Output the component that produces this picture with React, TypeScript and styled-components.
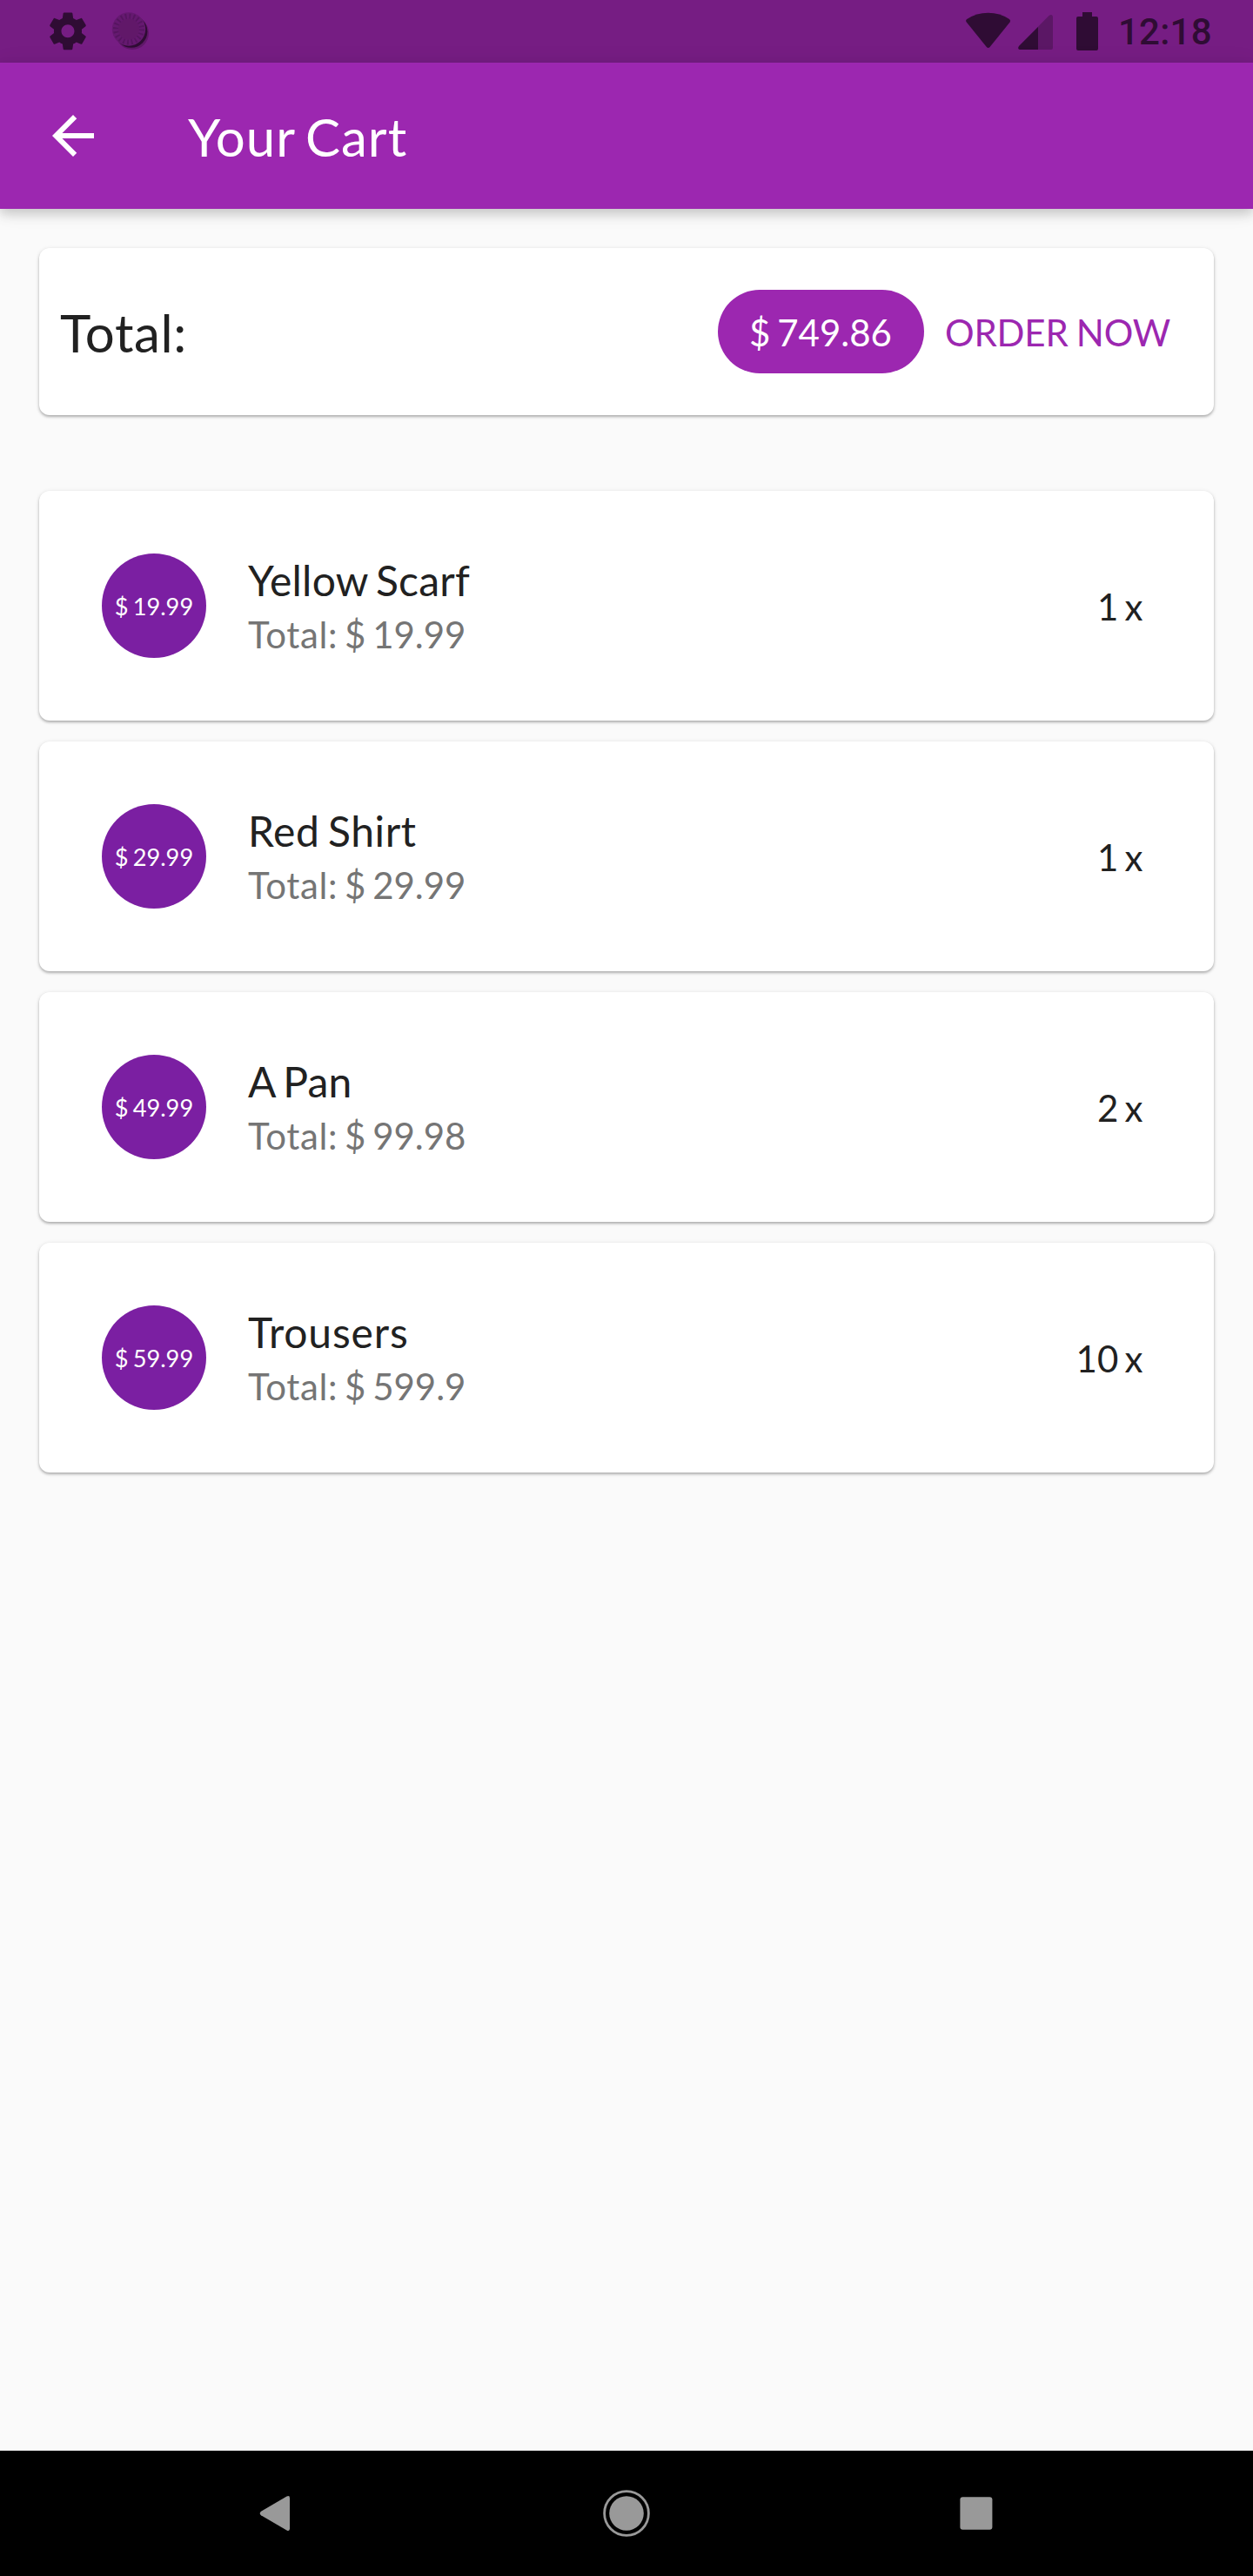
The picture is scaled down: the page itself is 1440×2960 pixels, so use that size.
import React from 'react';
import styled, { createGlobalStyle } from 'styled-components';

const GlobalStyle = createGlobalStyle`
  * { box-sizing: border-box; }
  body { margin: 0; background: #fafafa; font-family: Lato, 'Liberation Sans', sans-serif; }
`;

const Screen = styled.div`
  display: flex;
  flex-direction: column;
  width: 1440px;
  height: 2960px;
  background: #fafafa;
  color: #212121;
  overflow: hidden;
`;

const StatusBar = styled.div`
  display: flex;
  justify-content: space-between;
  height: 72px;
  flex: none;
  background: #761d83;
`;

const StatusGroup = styled.div`
  display: flex;
`;

const Clock = styled.span`
  width: 155px;
  padding-top: 1px;
  font: 500 42px/72px Roboto, sans-serif;
  letter-spacing: 0.25px;
  color: #2f0c34;
`;

const AppBar = styled.header`
  display: flex;
  align-items: center;
  flex: none;
  height: 168px;
  padding-left: 48px;
  gap: 96px;
  background: #9c27b0;
  box-shadow: 0 6px 12px rgba(0, 0, 0, 0.17), 0 2px 24px rgba(0, 0, 0, 0.08);
`;

const AppTitle = styled.h1`
  margin: 0;
  padding-top: 2px;
  font-size: 60px;
  font-weight: 400;
  line-height: 72px;
  letter-spacing: 0.97px;
  word-spacing: -4.1px;
  color: #fff;
`;

const Content = styled.main`
  display: flex;
  flex-direction: column;
  flex: 1;
  padding: 45px 45px 0;
`;

const Card = styled.section`
  display: flex;
  align-items: center;
  border-radius: 12px;
  background: #fff;
  box-shadow: 0 2px 3px rgba(0, 0, 0, 0.24), 0 1px 5px rgba(0, 0, 0, 0.12);
`;

const SummaryCard = styled(Card)`
  height: 192px;
  padding: 0 24px;
  margin-bottom: 87px;
`;

const TotalLabel = styled.span`
  flex: 1;
  padding-top: 2px;
  font-size: 60px;
  line-height: 72px;
  letter-spacing: 0.65px;
`;

const Chip = styled.span`
  display: flex;
  align-items: center;
  width: 237px;
  height: 96px;
  padding: 2px 0 0 36px;
  border-radius: 48px;
  background: #9c27b0;
  color: #fff;
  font-size: 42px;
  word-spacing: -2.9px;
  white-space: nowrap;
`;

const OrderButton = styled.button`
  width: 309px;
  height: 108px;
  padding: 2px 0 0 24px;
  border: 0;
  background: none;
  color: #9c27b0;
  font: 400 42px/50px Lato, sans-serif;
  letter-spacing: -0.18px;
  word-spacing: -1.3px;
  text-align: left;
  white-space: nowrap;
`;

const CartList = styled.div`
  display: flex;
  flex-direction: column;
  gap: 24px;
`;

const ItemCard = styled(Card)`
  height: 264px;
  padding: 0 72px;
`;

const Avatar = styled.div`
  display: flex;
  align-items: center;
  justify-content: center;
  width: 120px;
  height: 120px;
  border-radius: 50%;
  background: #7b1fa2;
  color: #fff;
  font-size: 27.2px;
  word-spacing: -1.9px;
`;

const ItemText = styled.div`
  display: flex;
  flex-direction: column;
  flex: 1;
  margin-left: 48px;
  padding-top: 3px;
`;

const ItemTitle = styled.span<{ $tracking: number }>`
  font-size: 48px;
  line-height: 58px;
  letter-spacing: ${(p) => p.$tracking}px;
  word-spacing: -3.3px;
`;

const ItemTotal = styled.span`
  margin-top: 4px;
  font-size: 42px;
  line-height: 58px;
  word-spacing: -2.9px;
  color: #757575;
`;

const ItemTotalLabel = styled.span`
  letter-spacing: 0.6px;
`;

const Quantity = styled.span`
  padding: 2px 9.5px 0 0;
  font-size: 42px;
  word-spacing: -3.5px;
`;

const NavBar = styled.nav`
  display: flex;
  align-items: center;
  justify-content: center;
  gap: 258px;
  flex: none;
  height: 144px;
  background: #000;
`;

interface CartItem {
  title: string;
  tracking: number;
  price: string;
  total: string;
  quantity: number;
}

const items: CartItem[] = [
  { title: 'Yellow Scarf', tracking: 0.24, price: '19.99', total: '19.99', quantity: 1 },
  { title: 'Red Shirt', tracking: 0.57, price: '29.99', total: '29.99', quantity: 1 },
  { title: 'A Pan', tracking: 0.2, price: '49.99', total: '99.98', quantity: 2 },
  { title: 'Trousers', tracking: 0.85, price: '59.99', total: '599.9', quantity: 10 },
];

const SystemIcons = () => (
  <svg width="200" height="72" viewBox="0 0 200 72">
    <path
      transform="translate(52.3 10.1) scale(2.14)"
      fill="#2f0c34"
      d="M19.43 12.98c.04-.32.07-.64.07-.98s-.03-.66-.07-.98l2.11-1.65c.19-.15.24-.42.12-.64l-2-3.46c-.12-.22-.39-.3-.61-.22l-2.49 1c-.52-.4-1.08-.73-1.69-.98l-.38-2.65C14.46 2.18 14.25 2 14 2h-4c-.25 0-.46.18-.49.42l-.38 2.65c-.61.25-1.17.59-1.69.98l-2.49-1c-.23-.09-.49 0-.61.22l-2 3.46c-.13.22-.07.49.12.64l2.11 1.65c-.04.32-.07.65-.07.98s.03.66.07.98l-2.11 1.65c-.19.15-.24.42-.12.64l2 3.46c.12.22.39.3.61.22l2.49-1c.52.4 1.08.73 1.69.98l.38 2.65c.03.24.24.42.49.42h4c.25 0 .46-.18.49-.42l.38-2.65c.61-.25 1.17-.59 1.69-.98l2.49 1c.23.09.49 0 .61-.22l2-3.46c.12-.22.07-.49-.12-.64l-2.11-1.65zM12 15.5c-1.93 0-3.5-1.57-3.5-3.5s1.57-3.5 3.5-3.5 3.5 1.57 3.5 3.5-1.57 3.5-3.5 3.5z"
    />
    <circle cx="152" cy="38" r="19" fill="#601869" />
    <circle cx="150.8" cy="36.2" r="18.6" fill="#2f0c34" />
    <circle cx="148" cy="33.5" r="19.2" fill="#651970" />
    <circle cx="148" cy="33.5" r="15" fill="none" stroke="#561460" strokeWidth="6" strokeDasharray="1.8 2.912" />
    <circle cx="148" cy="33.5" r="12" fill="#611869" />
  </svg>
);

const SignalIcons = () => (
  <svg width="179" height="72" viewBox="1106 0 179 72">
    <path d="M1110.8 25.5Q1109.2 23.5 1111.2 22Q1122 14.7 1135.6 14.7Q1149.2 14.7 1160 22Q1162 23.5 1160.6 25.5L1137.6 54Q1135.7 56 1133.8 54Z" fill="#2f0c34" />
    <path d="M1171 53L1205.5 18Q1209 15.5 1210 19V55Q1210 57 1208 57H1172Q1169 56 1171 53Z" fill="#5b1765" />
    <path d="M1193 31V57H1172Q1169 56 1171 53Z" fill="#2f0c34" />
    <path d="M1244 14H1255V19H1260Q1262 19 1262 21V56Q1262 58 1260 58H1239Q1237 58 1237 56V21Q1237 19 1239 19H1244Z" fill="#2f0c34" />
  </svg>
);

const BackArrow = () => (
  <svg width="72" height="72" viewBox="0 0 24 24" fill="#fff">
    <path d="M20 11H7.83l5.59-5.59L12 4l-8 8 8 8 1.41-1.41L7.83 13H20v-2z" />
  </svg>
);

const NavIcon = ({ children }: { children: React.ReactNode }) => (
  <svg width="144" height="144" viewBox="-72 -72 144 144" fill="#999">{children}</svg>
);

export default function App() {
  return (
    <Screen>
      <GlobalStyle />
      <StatusBar>
        <SystemIcons />
        <StatusGroup>
          <SignalIcons />
          <Clock>12:18</Clock>
        </StatusGroup>
      </StatusBar>
      <AppBar>
        <BackArrow />
        <AppTitle>Your Cart</AppTitle>
      </AppBar>
      <Content>
        <SummaryCard>
          <TotalLabel>Total:</TotalLabel>
          <Chip>$ 749.86</Chip>
          <OrderButton>ORDER NOW</OrderButton>
        </SummaryCard>
        <CartList>
          {items.map((item) => (
            <ItemCard key={item.title}>
              <Avatar>{`$ ${item.price}`}</Avatar>
              <ItemText>
                <ItemTitle $tracking={item.tracking}>{item.title}</ItemTitle>
                <ItemTotal>
                  <ItemTotalLabel>Total:</ItemTotalLabel>
                  {` $ ${item.total}`}
                </ItemTotal>
              </ItemText>
              <Quantity>{`${item.quantity} x`}</Quantity>
            </ItemCard>
          ))}
        </CartList>
      </Content>
      <NavBar>
        <NavIcon>
          <path d="M-18 -2.3L11.5 -19.4Q15 -21 15 -17.5V17.5Q15 21 11.5 19.4L-18 2.3Q-20.6 0 -18 -2.3Z" />
        </NavIcon>
        <NavIcon>
          <circle r="19.8" />
          <circle r="25.4" fill="none" stroke="#999" strokeWidth="2.8" />
        </NavIcon>
        <NavIcon>
          <rect x="-18.6" y="-18.7" width="37" height="37.4" rx="3" />
        </NavIcon>
      </NavBar>
    </Screen>
  );
}
